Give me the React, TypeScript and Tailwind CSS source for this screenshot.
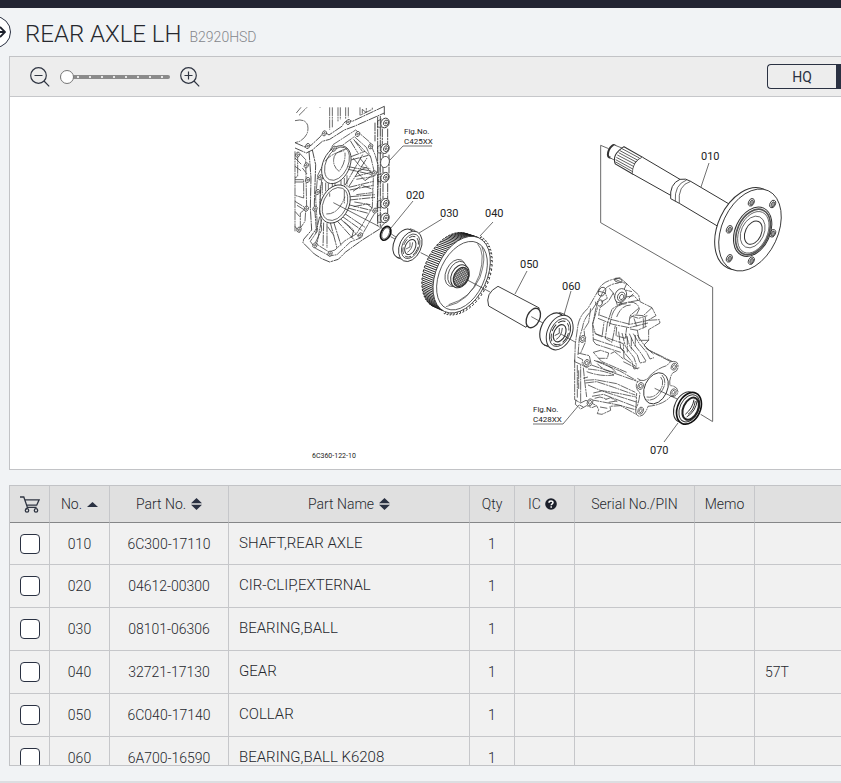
import type { ReactNode } from "react";

type Part = {
  no: string;
  partNo: string;
  name: string;
  qty: number;
  remark?: string;
};

const PARTS: Part[] = [
  { no: "010", partNo: "6C300-17110", name: "SHAFT,REAR AXLE", qty: 1 },
  { no: "020", partNo: "04612-00300", name: "CIR-CLIP,EXTERNAL", qty: 1 },
  { no: "030", partNo: "08101-06306", name: "BEARING,BALL", qty: 1 },
  { no: "040", partNo: "32721-17130", name: "GEAR", qty: 1, remark: "57T" },
  { no: "050", partNo: "6C040-17140", name: "COLLAR", qty: 1 },
  { no: "060", partNo: "6A700-16590", name: "BEARING,BALL K6208", qty: 1 },
];

/* ---------- small icons ---------- */

function ZoomIcon({ plus }: { plus?: boolean }) {
  return (
    <svg width="20" height="20" viewBox="0 0 20 20" fill="none" stroke="#2f3542" strokeWidth="1.2">
      <circle cx="8.5" cy="8.5" r="7.8" />
      <path d="M4.5 8.5h8M14 14l5.2 5.4" />
      {plus && <path d="M8.5 4.5v8" />}
    </svg>
  );
}

function CartIcon() {
  return (
    <svg width="20" height="17" viewBox="0 0 20 17" fill="none" stroke="#2f3542" strokeWidth="1.3">
      <path d="M0 1h3.8l3.6 10.4h9.2M4.8 3.8h14.3l-2.4 5.4H6.7M7.4 11.4 6 13.4" />
      <circle cx="7" cy="14.4" r="1.7" />
      <circle cx="16" cy="14.4" r="1.7" />
    </svg>
  );
}

function SortIcon({ up }: { up?: boolean }) {
  return (
    <svg width="11" height="12" viewBox="0 0 11 12" fill="#2a3142">
      {up ? <path d="M0 9 5.5 4 11 9z" /> : <path d="M0 5.2 5.5 0 11 5.2zM0 6.8h11L5.5 12z" />}
    </svg>
  );
}

function HelpIcon() {
  return (
    <svg width="12" height="12" viewBox="0 0 12 12">
      <circle cx="6" cy="6" r="5.8" fill="#1c202b" />
      <path d="M4 4.7C4.1 2.4 8 2.5 8 4.6 8 5.9 6.2 5.8 6.2 7.3M6.2 8.3v1.5" fill="none" stroke="#fff" strokeWidth="1.5" />
    </svg>
  );
}

/* ---------- exploded view ---------- */

type EllipseProps = {
  c: [number, number];
  r: [number, number];
  rot?: number;
  w?: number;
  fill?: string;
  dash?: string;
  stroke?: string;
};

function Oval({ c, r, rot = 25, w, fill, dash, stroke }: EllipseProps) {
  return (
    <ellipse
      cx={c[0]}
      cy={c[1]}
      rx={r[0]}
      ry={r[1]}
      transform={`rotate(${rot} ${c[0]} ${c[1]})`}
      strokeWidth={w}
      fill={fill}
      stroke={stroke}
      strokeDasharray={dash}
    />
  );
}

// point on a tilted ellipse, t in radians
function at(cx: number, cy: number, rx: number, ry: number, t: number, rot = 25) {
  const a = (rot * Math.PI) / 180;
  const x = rx * Math.cos(t);
  const y = ry * Math.sin(t);
  return [cx + x * Math.cos(a) - y * Math.sin(a), cy + x * Math.sin(a) + y * Math.cos(a)];
}

function gearTeeth() {
  const count = 58;
  let wide = "";
  let rim = "";
  for (let i = 0; i < count; i++) {
    const t = (i / count) * Math.PI * 2;
    const [x, y] = at(275, 284, 76, 122, t);
    const [bx, by] = at(241, 271, 76, 120, t);
    const a = (25 * Math.PI) / 180;
    const nx = Math.cos(t) / 76;
    const ny = Math.sin(t) / 123;
    const facing = (nx * Math.cos(a) - ny * Math.sin(a)) * -37 + (nx * Math.sin(a) + ny * Math.cos(a)) * -14;
    if (facing > 0) {
      // each tooth: two flanks joined at the far end
      const [x2, y2] = at(275, 284, 76, 122, t + 0.055);
      const [bx2, by2] = at(241, 271, 76, 120, t + 0.055);
      wide += `M${x} ${y}L${bx} ${by}L${bx2} ${by2}L${x2} ${y2}`;
    } else {
      const [ox, oy] = at(275, 284, 82, 128, t);
      const [ox2, oy2] = at(275, 284, 82, 128, t + 0.05);
      rim += `M${x} ${y}L${ox} ${oy}L${ox2} ${oy2}`;
    }
  }
  return { wide, rim };
}

const TEETH = gearTeeth();

function TransmissionCase() {
  return (
    <g transform="translate(285 98) scale(0.3333)" strokeDasharray="26 2 6 2">
      <path d="M30 134 62 148 78 142 106 116Q118 98 132 111L172 84Q180 62 202 70L298 25M30 150 64 165 82 156 112 130 134 124 178 96 210 84 298 45M298 25V52" strokeWidth="2.6" />
      <path d="M134 28V95M142 28V88M159 28V70M166 28V65M182 28V62M190 28V58M34 45 48 28M42 52 66 28M105 28V30M225 28V52L262 34V28M232 46V34L244 44V30" />
      <path d="M30 68Q60 60 68 82 74 112 44 130L30 134M30 160V400M38 165V235L30 240M46 168 62 185 65 330 46 345V400M52 210 66 228M30 245H56V300L30 292M30 252H56M30 180 50 200M30 205 48 218M30 310 62 330M30 340 44 356M36 322 62 338 60 370 38 402M30 385 44 404" />
      <path d="M72 160 78 240 76 330 80 396 56 424 54 434 88 468 110 482 134 492 160 484 182 462 232 426 292 388M82 156 92 200 88 318 94 392 72 424" strokeWidth="2.6" />
      <path d="M144 140 212 96 226 108 254 132 270 170 282 210 276 334 250 378 226 420 196 432 156 470 134 474 90 450 76 430 98 398 92 300 98 232Z" />
      <path d="M150 158 208 116 244 148 258 180 266 214 262 328 238 370 214 408 180 428 150 456 132 462 100 442 92 432 110 396 104 310 110 246Z" />
      <path d="M278 56V384M286 54V386M292 92V140M308 92V140M312 170V226M294 168V226M308 256V304M294 256V304M308 330V350M270 74V130M298 376 284 390" strokeWidth="2.6" />
      {[75, 152, 238, 316, 360].map((y) => (
        <g key={y} strokeDasharray="none">
          <Oval c={[300, y]} r={[12, 15]} fill="#fff" w={2.6} />
          <Oval c={[303, y]} r={[7, 9]} fill="none" w={2.4} />
          <Oval c={[303, y]} r={[2, 3]} fill="none" w={2.4} />
          <path d={`M290 ${y - 12}L278 ${y - 6}V${y + 12}L290 ${y + 14}`} />
        </g>
      ))}
      <Oval c={[300, 192]} r={[13, 17]} fill="#fff" rot={15} dash="none" />
      <Oval c={[154, 200]} r={[40, 60]} fill="#fff" w={2.4} dash="none" />
      <Oval c={[156, 197]} r={[33, 53]} dash="none" w={2} />
      <path d="M186 152Q146 162 146 184 144 206 162 220 182 196 180 164M120 190Q138 166 178 158" />
      <path d="M112 252V290M122 254V282M130 256V276M142 255V268M168 246V262M178 240V262M186 232V266M150 255V266M106 262V316M104 330V350" />
      <path d="M190 206 262 220M190 214 262 230M192 268 266 250M194 276 266 262M196 296 270 290M194 306 270 298M190 320 262 338M188 330 250 346M178 346 240 388M170 354 232 398M164 360 222 416M154 366 206 424M146 372 168 442M136 374 156 450M126 376 126 450M116 374 114 446M110 364 96 436M104 356 92 406M180 262 234 168M190 268 246 180M198 176 240 160M198 186 250 172M196 128 218 164M206 124 232 160M216 222 244 208 264 230 240 248ZM204 280 230 262 264 274M206 326 246 318 262 330M178 372 206 396 200 420M128 386 146 412" strokeWidth="2.4" />
      <path d="M210 236 262 222M214 244 264 236M204 180 226 206 256 212M212 130 240 160 258 178M224 180 246 206M208 312 256 320M214 290 262 284" />
      <Oval c={[150, 318]} r={[42, 60]} fill="#fff" w={2.6} dash="none" />
      <Oval c={[150, 318]} r={[35, 52]} dash="none" w={2} />
      <path d="M124 348Q160 350 180 296M134 296V286M178 276V316" />
      {[[68, 144], [118, 106], [190, 72], [147, 152], [218, 108], [257, 145], [268, 226], [270, 338], [226, 412], [135, 467], [90, 442], [90, 332], [106, 238], [64, 202], [68, 246], [64, 332], [42, 395], [38, 170], [98, 282]].map(([x, y]) => (
        <g key={`${x}-${y}`} strokeDasharray="none">
          <Oval c={[x, y]} r={[6, 8]} fill="#fff" w={2.2} />
          <Oval c={[x, y]} r={[2, 3]} w={2} />
        </g>
      ))}
      <path d="M145 314 283 386M316 406 334 418" strokeDasharray="none" />
    </g>
  );
}

function AxleHousing() {
  return (
    <g transform="translate(520 265) scale(0.3333)" strokeDasharray="26 2 6 2">
      <path d="M164 290 166 236 174 180Q180 150 204 130L234 78Q244 50 284 42L300 38 320 56 338 74 356 90 360 110 396 128 408 152 384 166 418 164 420 174 386 194 386 226 372 240 380 252 458 290" fill="#fff" />
      <path d="M174 270 178 220 188 186Q192 158 214 138L244 92Q252 64 284 56L296 54M212 130 206 172 192 194 196 232 182 264M226 110 232 130 218 176 220 228M234 78 256 84 262 100 242 112" />
      <path d="M284 42 306 52 320 56 312 74 336 80M268 70 280 84 292 120M296 118 322 112 356 106M340 86 326 100M318 96 342 92 356 108M280 84 266 108 240 128 236 152M306 114 276 132 262 176M320 116Q288 116 276 150L268 184M332 120Q304 120 290 156M326 112Q352 108 358 132L350 148M356 130 330 152 326 182M396 128 370 152 342 150 330 160" />
      <path d="M238 150 276 164 330 178 384 166M234 160 278 178 328 188 384 174M228 128 218 178 226 206 246 216 252 172M262 176 256 220 276 232 286 182M290 186 288 212 316 220 320 188M226 206 310 236 312 280M220 222 304 250 314 260M220 228 228 238 302 262M330 152 356 160 382 152M330 192 352 196 380 184M352 196 358 226 386 226M370 160V190M376 156V186M342 160 350 184" />
      <path d="M296 200 302 250 336 290 342 312 360 308M306 204 316 244 342 278 350 302M316 206 330 244 352 270 360 294 378 290M328 206 344 240 364 266 378 288M340 206 358 236 380 262 390 282 402 278M352 210 372 240 400 268M322 214V262M334 218V256M346 210V244M310 290 354 312M312 280 350 306M220 262 242 256 266 264 262 280 236 280ZM236 280 246 290 320 322M272 266 284 260 310 282" />
      <path d="M174 264 208 272 214 300 200 308 186 300 188 284 172 276M164 284V404L182 414V298M172 300V400M176 316V372M164 290 182 298M190 308 194 348 200 396" />
      <path d="M214 300 360 352M222 286 300 318 348 346M230 288Q270 300 288 322 250 318 232 296M204 312Q250 316 282 330 244 336 200 320M196 346 226 344 290 356 346 382M196 354 230 350 284 368 346 390M204 360 240 376 290 384 348 396M220 384 246 378 352 412M216 394 250 388 348 426M212 404 296 420 352 436M190 340 204 336M224 400 240 396 260 402M256 404 272 398 292 410M266 412 290 408" />
      <path d="M168 404 166 418 182 432 200 422 216 428 230 422 236 434 232 446 246 448 272 436 270 424 302 422 352 450M182 414 198 406 226 420M240 426 262 430M178 420 190 426" />
      <path d="M452 290Q476 286 474 304 476 318 458 324 446 342 450 362 472 362 474 380 470 398 452 394 430 420 384 424 374 454 358 454 344 450 348 430 356 418 360 384L352 374Q342 352 362 346 378 350 388 334 412 310 440 302Z" fill="#fff" />
      <path d="M452 290 386 256M362 346 352 340M348 430 350 384" />
      {[[462, 305], [460, 382], [362, 363], [362, 437], [200, 294], [210, 412], [188, 222]].map(([x, y]) => (
        <g key={`${x}-${y}`} strokeDasharray="none">
          <Oval c={[x, y]} r={[8, 11]} fill="#fff" w={2} />
          <Oval c={[x, y]} r={[4, 6]} w={2} />
        </g>
      ))}
      <g strokeDasharray="none">
        <Oval c={[302, 92]} r={[17, 22]} fill="#fff" />
        <Oval c={[304, 95]} r={[11, 14]} />
        <Oval c={[305, 96]} r={[6, 8]} />
        <Oval c={[246, 80]} r={[10, 14]} />
        <Oval c={[295, 46]} r={[12, 6]} rot={15} />
        <Oval c={[240, 114]} r={[7, 10]} />
      </g>
      <Oval c={[408, 370]} r={[34, 49]} fill="#fff" w={2.6} dash="none" />
      <path d="M426 330Q446 352 420 386 402 410 378 404M422 336Q438 354 414 384 398 400 380 396" />
      <path d="M404 370 480 406" strokeDasharray="none" />
    </g>
  );
}

function Bearing({ c, s }: { c: [number, number]; s: number }) {
  return (
    <g transform={`translate(${c[0]} ${c[1]}) scale(${s})`}>
      <Oval c={[-12, -4]} r={[30, 46]} fill="#fff" w={3} />
      <path d="M-34 37-8 47M6-49 22-43" />
      <Oval c={[7, 4]} r={[32, 48]} fill="#fff" w={2.6} />
      <Oval c={[8, 4]} r={[25, 39]} w={2.2} />
      <Oval c={[8, 5]} r={[21, 33]} w={2.4} dash="20 7" />
      <Oval c={[7, 6]} r={[15, 24]} w={3} />
      <path d="M-2 22Q12 14 14-8M-6 12 6 6V-8" />
    </g>
  );
}

function Gear() {
  return (
    <g transform="translate(370 180) scale(0.3333)">
      <Oval c={[241, 271]} r={[76, 120]} fill="#fff" stroke="none" />
      <path d={TEETH.wide} stroke="#1c1c1c" strokeWidth="2.8" />
      <path d={TEETH.rim} stroke="#1c1c1c" strokeWidth="2.6" />
      <Oval c={[275, 284]} r={[76, 122]} fill="#fff" w={2.4} />
      <Oval c={[276, 287]} r={[67, 109]} w={2.2} />
      <path d="M322 190Q348 218 328 286 300 366 228 380M336 200Q350 234 330 292 302 356 236 374" strokeWidth="2" />
      <Oval c={[256, 279]} r={[28, 43]} fill="#fff" />
      <Oval c={[262, 281]} r={[26, 39]} fill="#fff" />
      <Oval c={[270, 289]} r={[26, 36]} fill="#fff" w={3} />
      <Oval c={[273, 291]} r={[21, 30]} fill="url(#splines)" w={4} />
      <path d="M292 300 360 336M152 218 180 232" />
    </g>
  );
}

function AxleShaft() {
  const bolts = [[484, 217], [548, 222], [418, 298], [548, 310], [418, 385], [484, 392]];
  return (
    <g transform="translate(590 130) scale(0.3333)">
      <path d="M32 46V278L368 472V874M32 46 56 56" />
      <Oval c={[66, 64]} r={[10, 20]} fill="#fff" w={6} />
      <path d="M72 44 100 52 90 88 60 84Z" fill="#fff" stroke="none" />
      <path d="M70 44 96 54M58 82 76 92" />
      <path d="M102 50 158 82Q128 92 128 132L76 102Q64 74 102 50Z" fill="#fff" strokeWidth="3.2" />
      <path d="M96 56 148 84M90 62 142 90M86 68 138 96M82 75 134 102M79 82 132 110M77 89 130 118M77 96 128 125" strokeWidth="2.4" />
      <path d="M158 82 270 148 246 204 128 132Q128 96 158 82Z" fill="#fff" stroke="none" />
      <path d="M158 82 270 148M128 132 242 196" strokeWidth="3" />
      <path d="M290 152 424 228 384 292 268 220Z" fill="#fff" stroke="none" />
      <path d="M270 148Q288 144 302 154L424 226M270 148Q238 162 242 206L268 220 382 288" strokeWidth="3" />
      <path d="M302 154Q262 166 268 220M290 150Q252 164 256 214" strokeWidth="2.2" />
      <Oval c={[468, 296]} r={[84, 130]} fill="#fff" w={3} />
      <Oval c={[480, 300]} r={[84, 130]} fill="#fff" w={2.6} />
      {bolts.map(([x, y]) => (
        <g key={`${x}-${y}`}>
          <Oval c={[x, y]} r={[8, 12]} w={2.6} />
          <Oval c={[x + 1, y + 1]} r={[5, 8]} fill="#999" w={2} />
        </g>
      ))}
      <Oval c={[488, 305]} r={[52, 78]} w={3} />
      <Oval c={[489, 306]} r={[47, 72]} w={5} stroke="#555" />
      <Oval c={[490, 307]} r={[42, 66]} w={2} />
      <Oval c={[488, 306]} r={[34, 50]} w={2} />
      <Oval c={[490, 308]} r={[24, 37]} w={3} />
    </g>
  );
}

function Label({ x, y, children }: { x: number; y: number; children: ReactNode }) {
  return (
    <text x={x} y={y} fontSize="11" fill="#222" stroke="none">
      {children}
    </text>
  );
}

function ExplodedView() {
  return (
    <svg
      width="500"
      height="370"
      viewBox="290 98 500 370"
      fill="none"
      stroke="#333"
      strokeWidth="2.2"
      className="block shrink-0 font-['Roboto','Liberation_Sans',sans-serif]"
      role="img"
      aria-label="Rear axle LH exploded view"
    >
      <defs>
        <pattern id="splines" width="5" height="5" patternUnits="userSpaceOnUse">
          <rect width="5" height="5" fill="#ddd" stroke="none" />
          <path d="M0 1h5M1 0v5" stroke="#222" strokeWidth="1.6" />
        </pattern>
      </defs>
      <TransmissionCase />
      <AxleShaft />
      <AxleHousing />

      <g transform="translate(370 180) scale(0.3333)">
        <Oval c={[47, 160]} r={[14, 22]} w={5} stroke="#111" />
        <Oval c={[47, 160]} r={[10, 18]} w={2} />
        <path d="M62 170 84 182" />
      </g>
      <Bearing c={[408, 245]} s={0.3333} />
      <Gear />

      {/* collar */}
      <g transform="translate(370 180) scale(0.3333)">
        <path d="M384 319 508 384 468 442 356 378Q344 340 384 319Z" fill="#fff" strokeWidth="2.8" />
        <Oval c={[490, 414]} r={[19, 31]} fill="#fff" w={4} />
        <path d="M484 410 528 434" />
      </g>
      <Bearing c={[557, 331]} s={0.38} />
      <path d="M561 334 575 342" strokeWidth="0.7" />

      {/* oil seal */}
      <g transform="translate(520 265) scale(0.3333)">
        <Oval c={[495, 426]} r={[31, 48]} fill="#fff" w={3} />
        <Oval c={[507, 430]} r={[34, 50]} fill="#fff" w={5} stroke="#111" />
        <Oval c={[508, 430]} r={[28, 43]} w={3} />
        <Oval c={[512, 431]} r={[22, 35]} w={6} stroke="#222" />
        <path d="M500 456Q528 440 532 404M504 448Q522 436 526 408M496 448Q518 430 522 404" strokeWidth="3" />
        <path d="M542 448 578 470" />
      </g>

      {/* leader lines */}
      <g strokeWidth="0.7">
        <path d="M709 163 701 187M413 201 391 228M442 219 419 233M493 222 480 236M527 271 515 294M571 291 564 315M678 423 664 442" />
        <path d="M432 146H403L390 160M533 424H563L579 405" />
      </g>

      <Label x={701} y={160}>010</Label>
      <Label x={406} y={199}>020</Label>
      <Label x={440} y={217}>030</Label>
      <Label x={485} y={217}>040</Label>
      <Label x={520} y={268}>050</Label>
      <Label x={562} y={290}>060</Label>
      <Label x={650} y={454}>070</Label>
      <g fontSize="8" fill="#222" stroke="none">
        <text x="404" y="134">Fig.No.</text>
        <text x="404" y="144">C425XX</text>
        <text x="533" y="412">Fig.No.</text>
        <text x="533" y="422">C428XX</text>
        <text x="312" y="458" fontSize="7">6C360-122-10</text>
      </g>
    </svg>
  );
}

/* ---------- page ---------- */

function Toolbar() {
  return (
    <div className="flex h-10 items-center border-b border-[#c6c7ca] bg-[#ededed] pl-5">
      <button type="button" aria-label="Zoom out" className="shrink-0">
        <ZoomIcon />
      </button>
      <input
        type="range"
        aria-label="Zoom level"
        min={0}
        max={9}
        defaultValue={0}
        className="mx-[10px] h-4 w-[110px] appearance-none bg-transparent [&::-webkit-slider-runnable-track]:h-1 [&::-webkit-slider-runnable-track]:rounded-full [&::-webkit-slider-runnable-track]:bg-[#8b8b8b] [&::-webkit-slider-runnable-track]:bg-[radial-gradient(circle,#e6e6e6_1px,transparent_1.5px)] [&::-webkit-slider-runnable-track]:bg-size-[12px_4px] [&::-webkit-slider-thumb]:-mt-[5px] [&::-webkit-slider-thumb]:size-[14px] [&::-webkit-slider-thumb]:appearance-none [&::-webkit-slider-thumb]:rounded-full [&::-webkit-slider-thumb]:border [&::-webkit-slider-thumb]:border-[#777] [&::-webkit-slider-thumb]:bg-white"
      />
      <button type="button" aria-label="Zoom in" className="shrink-0">
        <ZoomIcon plus />
      </button>
      <div className="ml-auto flex h-[25px] w-[74px] overflow-hidden rounded-l border border-r-0 border-[#2a3142]">
        <button type="button" className="flex-1 text-sm text-[#2a3142]">
          HQ
        </button>
        <button type="button" aria-label="Standard quality" className="w-[5px] bg-[#2a3142]" />
      </div>
    </div>
  );
}

const TH = "border-r border-[#c6c7ca] p-0 text-center text-sm font-light";
const TD = "border-r border-b border-[#c6c7ca] p-0 text-center";

function PartsTable() {
  return (
    <div className="h-[281px] overflow-hidden border-y border-l border-[#c2c3c6]">
      <table className="w-full table-fixed border-separate border-spacing-0 text-[#26282e]">
        <colgroup>
          <col className="w-[40px]" />
          <col className="w-[60px]" />
          <col className="w-[119px]" />
          <col className="w-[241px]" />
          <col className="w-[45px]" />
          <col className="w-[60px]" />
          <col className="w-[120px]" />
          <col className="w-[60px]" />
          <col />
        </colgroup>
        <thead>
          <tr className="h-[37px] bg-[#e0e0e0] [&>th]:border-b [&>th]:border-b-[#858688]">
            <th className={TH} aria-label="Add to cart">
              <span className="flex justify-center">
                <CartIcon />
              </span>
            </th>
            <th className={TH}>
              <button type="button" className="inline-flex items-center gap-[5px]">
                No. <SortIcon up />
              </button>
            </th>
            <th className={TH}>
              <button type="button" className="inline-flex items-center gap-[5px]">
                Part No. <SortIcon />
              </button>
            </th>
            <th className={TH}>
              <button type="button" className="inline-flex items-center gap-[5px]">
                Part Name <SortIcon />
              </button>
            </th>
            <th className={TH}>Qty</th>
            <th className={TH}>
              <span className="inline-flex items-center gap-1 pr-1">
                IC <HelpIcon />
              </span>
            </th>
            <th className={TH}>Serial No./PIN</th>
            <th className={TH}>Memo</th>
            <th className="border-[#c6c7ca] p-0" />
          </tr>
        </thead>
        <tbody className="bg-[#f1f1f1] text-sm font-light">
          {PARTS.map((p) => (
            <tr key={p.no} className="h-[43px] first:h-[42px]">
              <td className={TD}>
                <input
                  type="checkbox"
                  aria-label={`Select ${p.no}`}
                  className="mx-auto block size-5 appearance-none rounded border border-[#2a3142] bg-white checked:bg-[#2a3142]"
                />
              </td>
              <td className={TD}>{p.no}</td>
              <td className={TD}>{p.partNo}</td>
              <td className="border-r border-b border-[#c6c7ca] p-0 pl-[10px] text-left text-[15px]">{p.name}</td>
              <td className={TD}>{p.qty}</td>
              <td className={TD} />
              <td className={TD} />
              <td className={TD} />
              <td className="border-b border-[#c6c7ca] p-0 pl-[10px] text-left">{p.remark}</td>
            </tr>
          ))}
        </tbody>
      </table>
    </div>
  );
}

export default function App() {
  return (
    <div className="min-h-screen overflow-hidden bg-[#f1f3f5] font-['Roboto','Liberation_Sans',sans-serif]">
      <div className="h-2 bg-[#232533]" />

      <header className="flex h-12 items-center">
        <button
          type="button"
          aria-label="Open menu"
          className="-ml-[21px] flex size-8 shrink-0 items-center justify-end rounded-full border border-[#2a3142] bg-white pr-1"
        >
          <svg width="14" height="12" viewBox="0 0 14 12" fill="none" stroke="#1c202b" strokeWidth="1.8">
            <path d="M0 6h13M8 1l5 5-5 5" />
          </svg>
        </button>
        <div className="flex items-baseline gap-2 pt-1 pl-[14px]">
          <h1 className="text-2xl font-light text-[#26282e]">REAR AXLE LH</h1>
          <span className="text-sm font-light text-[#85878c]">B2920HSD</span>
        </div>
      </header>

      <main className="pl-[9px]">
        <section className="border-y border-l border-[#c2c3c6] bg-white">
          <Toolbar />
          <div className="flex pt-px pb-px pl-[280px]">
            <ExplodedView />
          </div>
        </section>
        <div className="mt-[15px]">
          <PartsTable />
        </div>
      </main>

      <div className="mt-[15px] h-2 border-t-2 border-[#dcdee1]" />
    </div>
  );
}
